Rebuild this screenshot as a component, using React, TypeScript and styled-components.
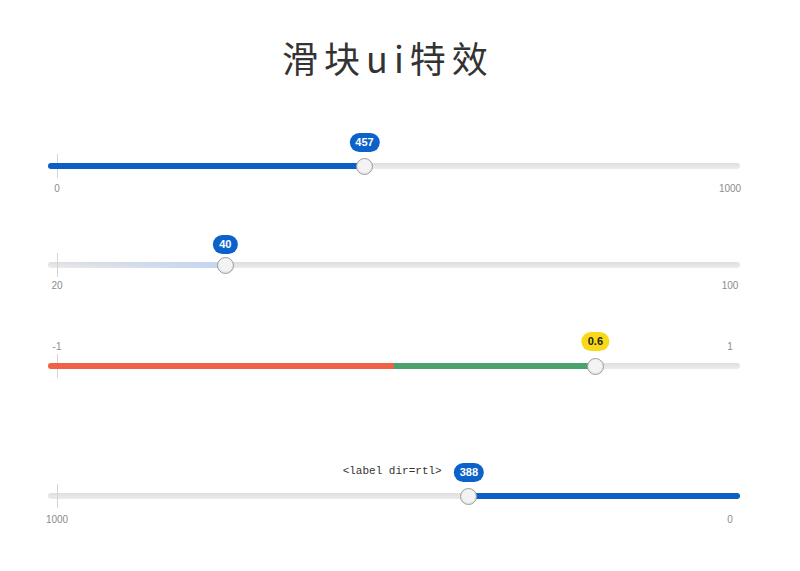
import styled, { createGlobalStyle } from "styled-components";

const GlobalStyle = createGlobalStyle`
  body {
    margin: 0;
    background: #ffffff;
    font-family: "Liberation Sans", Arial, sans-serif;
  }
`;

// thumb travels between these insets of the track
const INSET_L = 9;
const INSET_R = 10;

const Page = styled.div`
  width: 800px;
  display: flex;
  flex-direction: column;
  padding: 0 60px 0 48px;
  box-sizing: border-box;
`;

const Title = styled.h1`
  margin: 0;
  padding: 35px 12px 0 0;
  line-height: 44px;
  font-size: 36px;
  font-weight: 400;
  letter-spacing: 6px;
  text-align: center;
  color: #333;
  font-family: "Noto Sans CJK SC", "Noto Sans", sans-serif;
`;

const Block = styled.div<{ $top: number }>`
  display: flex;
  flex-direction: column;
  margin-top: ${(p) => p.$top}px;
`;

const Track = styled.div<{ $above?: boolean }>`
  position: relative;
  height: 6px;
  margin-top: ${(p) => (p.$above ? 9 : 0)}px;
  border-radius: 3px;
  background: linear-gradient(#dedede, #ececec);
`;

const Fill = styled.div<{ $bg: string }>`
  position: absolute;
  top: 0;
  bottom: 0;
  background: ${(p) => p.$bg};
`;

const Tick = styled.div`
  position: absolute;
  left: ${INSET_L}px;
  top: -9px;
  width: 1px;
  height: 24px;
  background: #d4d4d4;
`;

const Thumb = styled.div`
  position: absolute;
  top: 50%;
  width: 15px;
  height: 15px;
  margin: -8.5px 0 0 -8.5px;
  border-radius: 50%;
  border: 1px solid #9c9c9c;
  background: #f3f3f3;
  box-shadow: inset 0 -1px 2px rgba(0, 0, 0, 0.08);
`;

const Bubble = styled.div<{ $gap: number; $yellow?: boolean }>`
  position: absolute;
  bottom: calc(100% + ${(p) => p.$gap}px);
  transform: translateX(-50%);
  height: 19px;
  line-height: 19px;
  padding: 0 6px;
  border-radius: 10px;
  font-size: 11px;
  font-weight: 700;
  white-space: nowrap;
  background: ${(p) => (p.$yellow ? "#f8d91a" : "#0d62c9")};
  color: ${(p) => (p.$yellow ? "#222" : "#fff")};
`;

const DirLabel = styled.span`
  position: absolute;
  right: calc(100% + 12px);
  top: 0;
  line-height: 17px;
  font-family: "Liberation Mono", "Courier New", monospace;
  font-size: 11px;
  font-weight: 400;
  color: #333;
`;

const Scale = styled.div<{ $gap: number }>`
  display: flex;
  justify-content: space-between;
  margin: ${(p) => p.$gap}px -10px 0 -11px;
  font-size: 10px;
  line-height: 14px;
  color: #8c8c8c;
`;

const ScaleLabel = styled.span`
  width: 40px;
  text-align: center;
`;

const at = (frac: number) =>
  `calc(${INSET_L}px + (100% - ${INSET_L + INSET_R}px) * ${frac})`;

const radius = (from: number, to: number) => {
  if (from === 0 && to === 1) return "3px";
  if (from === 0) return "3px 0 0 3px";
  if (to === 1) return "0 3px 3px 0";
  return "0";
};

type SliderProps = {
  min: number;
  max: number;
  value: number;
  top: number;
  bubbleGap: number;
  scaleGap?: number;
  rtl?: boolean;
  yellow?: boolean;
  fills: { from: number; to: number; bg: string }[];
  labelAbove?: boolean;
  dirLabel?: string;
};

const Slider = ({
  min,
  max,
  value,
  top,
  bubbleGap,
  scaleGap = 13,
  rtl,
  yellow,
  fills,
  labelAbove,
  dirLabel,
}: SliderProps) => {
  const f = (v: number) => {
    const r = (v - min) / (max - min);
    return rtl ? 1 - r : r;
  };
  const pos = at(f(value));
  const labels = rtl ? [max, min] : [min, max];
  const scale = (
    <Scale $gap={labelAbove ? 0 : scaleGap}>
      {labels.map((l) => (
        <ScaleLabel key={l}>{l}</ScaleLabel>
      ))}
    </Scale>
  );
  return (
    <Block $top={top}>
      {labelAbove && scale}
      <Track $above={labelAbove}>
        <Tick />
        {fills.map((fl, i) => (
          <Fill
            key={i}
            $bg={fl.bg}
            style={{
              left: fl.from === 0 ? 0 : at(fl.from),
              right: fl.to === 1 ? 0 : `calc(100% - ${at(fl.to)})`,
              borderRadius: radius(fl.from, fl.to),
            }}
          />
        ))}
        <Bubble $gap={bubbleGap} $yellow={yellow} style={{ left: pos }}>
          {dirLabel && <DirLabel>{dirLabel}</DirLabel>}
          {value}
        </Bubble>
        <Thumb style={{ left: pos }} />
      </Track>
      {!labelAbove && scale}
    </Block>
  );
};

export default function App() {
  return (
    <>
      <GlobalStyle />
      <Page>
        <Title>滑块ui特效</Title>
        <Slider
          min={0}
          max={1000}
          value={457}
          top={84}
          bubbleGap={11}
          fills={[{ from: 0, to: 0.457, bg: "#0b5fc6" }]}
        />
        <Slider
          min={20}
          max={100}
          value={40}
          top={66}
          bubbleGap={8}
          scaleGap={11}
          fills={[
            {
              from: 0,
              to: 0.25,
              bg: "linear-gradient(90deg, rgba(200,216,240,0) 0%, #c3d5f0 100%)",
            },
          ]}
        />
        <Slider
          min={-1}
          max={1}
          value={0.6}
          top={47}
          bubbleGap={12}
          yellow
          labelAbove
          fills={[
            { from: 0, to: 0.5, bg: "#f0614a" },
            { from: 0.5, to: 0.8, bg: "#48a46c" },
          ]}
        />
        <Slider
          min={0}
          max={1000}
          value={388}
          top={124}
          bubbleGap={11}
          scaleGap={14}
          rtl
          dirLabel="<label dir=rtl>"
          fills={[{ from: 0.612, to: 1, bg: "#0b5fc6" }]}
        />
      </Page>
    </>
  );
}
